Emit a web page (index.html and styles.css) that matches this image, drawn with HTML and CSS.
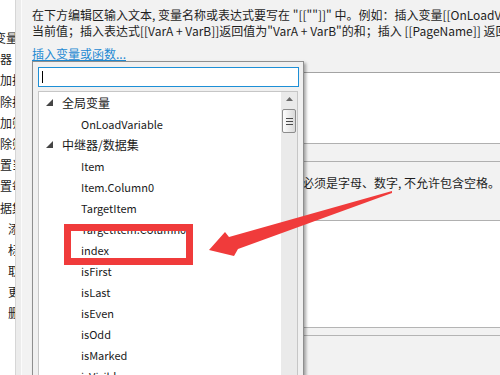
FILE: index.html
```html
<!DOCTYPE html>
<html lang="zh-CN">
<head>
<meta charset="utf-8">
<title>插入变量或函数</title>
<link rel="stylesheet" href="styles.css">
</head>
<body>
<div class="app">
  <div class="side">
    <div class="side-item shift">变量值</div>
    <div class="side-item">器</div>
    <div class="side-item">加排序</div>
    <div class="side-item">除排序</div>
    <div class="side-item">加筛选</div>
    <div class="side-item">除筛选</div>
    <div class="side-item">置当前</div>
    <div class="side-item">置每页</div>
    <div class="side-item">据集</div>
    <div class="side-item sub">添加行</div>
    <div class="side-item sub">标记行</div>
    <div class="side-item sub">取消标记</div>
    <div class="side-item sub">更新行</div>
    <div class="side-item sub">删除行</div>
  </div>
  <div class="divider"></div>
  <div class="main">
    <div class="desc">
      <div class="desc-line">在下方编辑区输入文本, 变量名称或表达式要写在 "[[""]]" 中。例如：插入变量[[OnLoadVariable]]返回值为变量的</div>
      <div class="desc-line">当前值；插入表达式[[VarA + VarB]]返回值为"VarA + VarB"的和；插入 [[PageName]] 返回值为当前页面名称。</div>
    </div>
    <div class="link-row"><span class="link">插入变量或函数...</span></div>
    <div class="editor"></div>
    <div class="bar"></div>
    <div class="hint">必须是字母、数字, 不允许包含空格。</div>
    <div class="box2"></div>
    <div class="band2"></div>

    <div class="popup">
      <div class="search"><span class="caret"></span></div>
      <div class="list">
        <div class="tree">
          <div class="row l1"><svg class="tri" width="7" height="7" viewBox="0 0 7 7"><polygon points="7,0 7,7 0,7"/></svg><span class="lbl">全局变量</span></div>
          <div class="row l2">OnLoadVariable</div>
          <div class="row l1"><svg class="tri" width="7" height="7" viewBox="0 0 7 7"><polygon points="7,0 7,7 0,7"/></svg><span class="lbl">中继器/数据集</span></div>
          <div class="row l2">Item</div>
          <div class="row l2">Item.Column0</div>
          <div class="row l2">TargetItem</div>
          <div class="row l2">TargetItem.Column0</div>
          <div class="row l2">index</div>
          <div class="row l2">isFirst</div>
          <div class="row l2">isLast</div>
          <div class="row l2">isEven</div>
          <div class="row l2">isOdd</div>
          <div class="row l2">isMarked</div>
          <div class="row l2">isVisible</div>
        </div>
        <div class="scroll">
          <svg class="up" width="7" height="4" viewBox="0 0 7 4"><polygon points="3.5,0 7,4 0,4"/></svg>
          <div class="thumb"><span></span><span></span><span></span></div>
        </div>
      </div>
    </div>
  </div>
</div>
<svg class="annot" width="500" height="375" viewBox="0 0 500 375">
  <rect x="67.5" y="227.5" width="122" height="34" fill="none" stroke="#f03b3b" stroke-width="7"/>
  <polygon points="209,250 225,232 229,237 392,191 392,193 238,249 234,256" fill="#f03b3b"/>
</svg>
</body>
</html>
```
FILE: styles.css
```css
* { box-sizing: border-box; margin: 0; padding: 0; }
html, body { width: 500px; height: 375px; overflow: hidden; }
body {
  font-family: "Noto Sans CJK SC", "Noto Sans", sans-serif;
  font-size: 12px;
  color: #222;
  background: #fff;
  position: relative;
}
.app { display: flex; height: 375px; }

.side {
  width: 15px;
  flex: none;
  overflow: hidden;
  background: #fff;
  padding-top: 27px;
}
.side-item {
  height: 21.2px;
  line-height: 21.2px;
  white-space: nowrap;
  color: #222;
}
.side-item.shift { margin-left: -6px; }
.side-item.sub { margin-left: 8px; }

.divider {
  width: 7px;
  flex: none;
  background: #ececec;
  border-left: 1px solid #d6d6d6;
  border-right: 1px solid #fbfbfb;
}

.main {
  flex: 1;
  position: relative;
  background: #f2f2f2;
  padding-left: 10px;
  overflow: hidden;
}
.desc { padding-top: 7px; }
.desc-line {
  line-height: 16px;
  white-space: nowrap;
  color: #1e1e1e;
}
.link-row { margin-top: 7px; line-height: 16px; }
.link { color: #1f8ad2; text-decoration: underline; }

.editor {
  margin-top: 10px;
  height: 72px;
  background: #fff;
  border-top: 1px solid #a3a3a3;
  border-bottom: 1px solid #b0b0b0;
}
.bar {
  height: 18px;
  border-bottom: 1px solid #b0b0b0;
}
.hint {
  height: 59px;
  padding: 13px 0 0 270px;
  line-height: 16px;
  white-space: nowrap;
  color: #1e1e1e;
  border-bottom: 1px solid #b0b0b0;
}
.box2 {
  height: 107px;
  background: #fff;
  border-bottom: 1px solid #b4b4b4;
}
.band2 {
  height: 8px;
  border-bottom: 1px solid #b4b4b4;
}

.popup {
  position: absolute;
  left: 10px;
  top: 61px;
  width: 272px;
  height: 330px;
  background: #f0f0f0;
  border: 1px solid #8e8e8e;
  box-shadow: 2px 2px 3px rgba(0, 0, 0, 0.35);
  padding: 5px 4px 0 5px;
}
.search {
  width: 261px;
  height: 20px;
  background: #fff;
  border: 1px solid #1d8fd6;
  display: flex;
  align-items: center;
}
.caret {
  width: 1px;
  height: 12px;
  margin-left: 3px;
  background: #000;
}
.list {
  margin-top: 4px;
  width: 260px;
  height: 300px;
  background: #fff;
  border: 1px solid #c6c6c6;
  display: flex;
}
.tree { flex: 1; }
.row {
  height: 21px;
  display: flex;
  align-items: center;
  white-space: nowrap;
  color: #1a1a1a;
}
.row.l1 { padding-left: 7px; }
.row.l2 { padding-left: 42px; font-size: 11px; }
.tri { fill: #454545; flex: none; }
.lbl { margin-left: 9px; }

.scroll {
  width: 16px;
  flex: none;
  background: #eaeaea;
  display: flex;
  flex-direction: column;
  align-items: center;
}
.up { fill: #6a6a6a; margin-top: 5px; }
.thumb {
  margin-top: 8px;
  width: 14px;
  height: 24px;
  border: 1px solid #8c8c8c;
  border-radius: 2px;
  background: linear-gradient(to right, #fdfdfd, #d9d9d9);
  display: flex;
  flex-direction: column;
  align-items: center;
  justify-content: center;
  gap: 2px;
}
.thumb span {
  width: 7px;
  height: 1px;
  background: #4a4a4a;
}

.annot {
  position: absolute;
  left: 0;
  top: 0;
  pointer-events: none;
}
```
